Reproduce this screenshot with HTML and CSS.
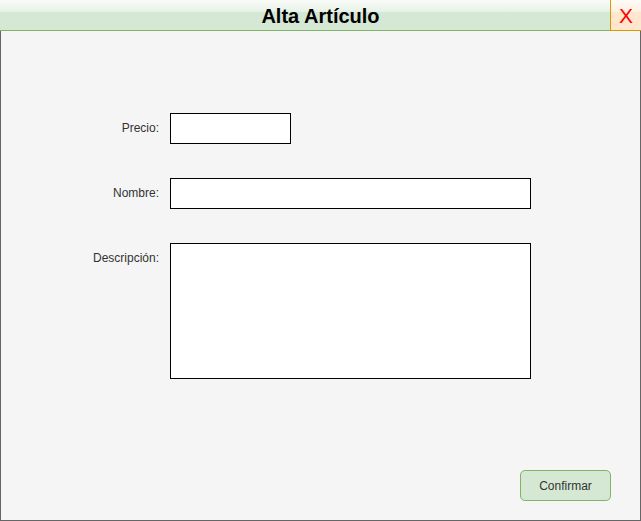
FILE: index.html
```html
<!DOCTYPE html>
<html lang="es">
<head>
<meta charset="utf-8">
<title>Alta Artículo</title>
<link rel="stylesheet" href="styles.css">
</head>
<body>
<div class="window">
  <div class="titlebar">
    <div class="title">Alta Artículo</div>
    <div class="close">X</div>
  </div>
  <div class="content">
    <div class="form">
      <label class="label">Precio:</label>
      <div class="field field-short"></div>
      <label class="label">Nombre:</label>
      <div class="field field-long"></div>
      <label class="label">Descripción:</label>
      <div class="field field-area"></div>
    </div>
    <div class="actions">
      <button class="btn">Confirmar</button>
    </div>
  </div>
</div>
</body>
</html>
```
FILE: styles.css
```css
html, body {
  margin: 0;
  padding: 0;
  background: #ffffff;
}
body {
  font-family: "Liberation Sans", Arial, Helvetica, sans-serif;
}
.window {
  width: 641px;
  height: 521px;
  display: flex;
  flex-direction: column;
}
.titlebar {
  height: 30px;
  border-bottom: 1px solid #82b366;
  display: flex;
  background:
    linear-gradient(to bottom, rgba(255,255,255,0.85) 0%, rgba(255,255,255,0.45) 38%, rgba(255,255,255,0) 40%),
    #d5e8d4;
}
.title {
  flex: 1;
  text-align: center;
  font-weight: bold;
  font-size: 20px;
  line-height: 32px;
  color: #000;
  padding-left: 31px;
}
.close {
  width: 30px;
  border-left: 1px solid #d79b00;
  border-bottom: 1px solid #d79b00;
  margin-bottom: -1px;
  text-align: center;
  font-size: 21px;
  line-height: 31px;
  color: #ff0000;
  background:
    linear-gradient(to bottom, rgba(255,255,255,0.85) 0%, rgba(255,255,255,0.45) 38%, rgba(255,255,255,0) 40%),
    #ffe6cc;
}
.content {
  flex: 1;
  border: 1px solid #666666;
  border-top: none;
  background: #f5f5f5;
  display: flex;
  flex-direction: column;
}
.form {
  display: grid;
  grid-template-columns: 158px 361px;
  column-gap: 11px;
  row-gap: 34px;
  padding-top: 82px;
  align-items: start;
}
.label {
  text-align: right;
  font-size: 12px;
  line-height: 31px;
  color: #333333;
}
.field {
  box-sizing: border-box;
  background: #ffffff;
  border: 1px solid #000000;
  height: 31px;
}
.field-short {
  width: 121px;
}
.field-long {
  width: 361px;
}
.field-area {
  width: 361px;
  height: 136px;
}
.actions {
  display: flex;
  justify-content: flex-end;
  padding-right: 29px;
  margin-top: 91px;
}
.btn {
  box-sizing: border-box;
  width: 91px;
  height: 31px;
  border: 1px solid #82b366;
  border-radius: 5px;
  background: #d5e8d4;
  font-family: "Liberation Sans", Arial, Helvetica, sans-serif;
  font-size: 12px;
  color: #333333;
  padding: 0;
}
```
